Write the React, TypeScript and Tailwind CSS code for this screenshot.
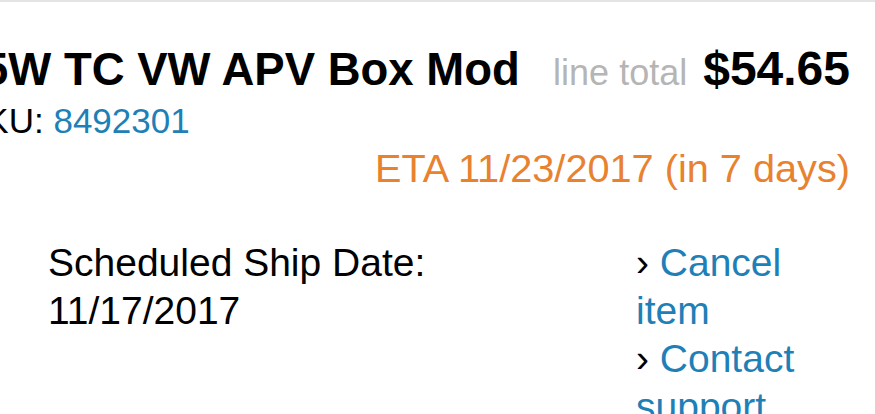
import React from "react";

export default function App() {
  return (
    <div className="w-[875px] h-[414px] overflow-hidden bg-white border-t-2 border-[#e4e4e4] pr-[25px] font-['Liberation_Sans',Arial,sans-serif] text-black">
      <div className="mt-[39px] ml-[-17px] flex items-baseline justify-between whitespace-nowrap">
        <span className="text-[45.5px] font-bold leading-[56px]">5W TC VW APV Box Mod</span>
        <span className="flex items-baseline">
          <span className="text-[36px] leading-[56px] text-[#b5b5b5] mr-[16px]">line total</span>
          <span className="text-[48px] font-bold leading-[56px]">$54.65</span>
        </span>
      </div>
      <div className="ml-[-38px] text-[35px] leading-[39px] whitespace-nowrap">
        SKU: <span className="text-[#1e80b6]">8492301</span>
      </div>
      <div className="mt-[5px] text-right text-[39.7px] leading-[46px] text-[#e8822f] whitespace-nowrap">
        ETA 11/23/2017 (in 7 days)
      </div>
      <div className="mt-[48px] pl-[48px] flex justify-between text-[39px] leading-[48px]">
        <div>
          <div>Scheduled Ship Date:</div>
          <div>11/17/2017</div>
        </div>
        <ul className="w-[214px]">
          <li>
            › <a className="text-[#1e80b6]">Cancel item</a>
          </li>
          <li>
            › <a className="text-[#1e80b6]">Contact support</a>
          </li>
        </ul>
      </div>
    </div>
  );
}
